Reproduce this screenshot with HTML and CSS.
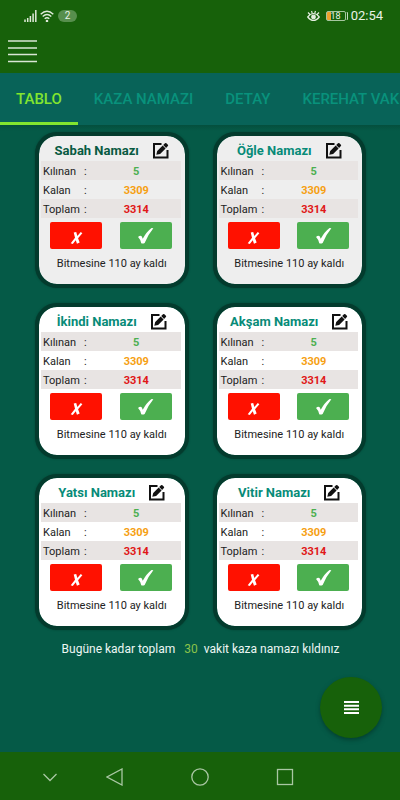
FILE: index.html
```html
<!DOCTYPE html>
<html lang="tr">
<head>
<meta charset="utf-8">
<meta name="viewport" content="width=device-width, initial-scale=1">
<title>Kaza Namazı</title>
<link rel="stylesheet" href="styles.css">
</head>
<body>
<svg class="sprite" aria-hidden="true">
  <symbol id="edit" viewBox="0 0 17 17">
    <path d="M9.500 2H2v13.500h13.500V8" fill="none" stroke="#111" stroke-width="2"/>
    <path d="M4.300 12.800l.9-3.800 5.500-5.500 2.900 2.900-5.500 5.500zM11.200 3l1.800-1.800q.7-.6 1.400 0l1.500 1.500q.6.700 0 1.400l-1.800 1.800z" fill="#111"/>
  </symbol>
  <symbol id="cross" viewBox="0 0 14 16">
    <path d="M4 2.500L6.700 2l1.200 4.400L11.600 2l1.700 1.300L8.700 8.800l1.700 4.700-2.900 1.300-1.300-3.900L3 15l-2.200-.8 4.600-5.800z" fill="#fff"/>
  </symbol>
  <symbol id="check" viewBox="0 0 16 16">
    <path d="M1 9.500q1.700-1.800 3.400-.8l1 2.400Q9 4.500 13.700 1l1.700.2Q10.500 7 7.200 15q-1.700 1-3.200.2Q3 11.500 1 9.500z" fill="#fff"/>
  </symbol>
</svg>
<header class="top">
  <div class="status">
    <div class="status-side">
      <svg width="13" height="12" viewBox="0 0 13 12" stroke="#dfead9" stroke-width="1.500"><path d="M1 9.500V12M3.700 8v4M6.400 6v6M9.100 3.500V12M11.800 0v12"/></svg>
      <svg width="14" height="12" viewBox="0 0 14 12" fill="none" stroke="#dfead9" stroke-width="1.400"><path d="M.7 4.200Q7-1.800 13.300 4.200M2.700 6.500q4.300-3.900 8.600 0M4.700 8.800q2.300-2 4.600 0"/><circle cx="7" cy="11" r=".6"/></svg>
      <span class="count">2</span>
    </div>
    <div class="status-side">
      <svg width="13" height="12" viewBox="0 0 13 12" fill="none" stroke="#e5eee1" stroke-width="1.200"><path d="M.7 7Q6.500 0 12.300 7 6.500 14 .7 7zM1 2.500L3 4.500M4.500 1l.7 2M8.500 1l-.7 2M12 2.500l-2 2"/><circle cx="6.500" cy="7" r="1.800" fill="#e5eee1"/></svg>
      <span class="battery">18</span>
      <span class="clock">02:54</span>
    </div>
  </div>
  <button class="menu" aria-label="Menü"><svg width="29" height="23" viewBox="0 0 29 23" stroke="#d9e6d5" stroke-width="1.500"><path d="M0 1h29M0 8h29M0 14.500h29M0 21.500h29"/></svg></button>
</header>
<nav class="tabs">
  <a class="tab active" href="#tablo">TABLO</a>
  <a class="tab" href="#kaza">KAZA NAMAZI</a>
  <a class="tab" href="#detay">DETAY</a>
  <a class="tab" href="#kerehat">KEREHAT VAK</a>
</nav>
<main class="content" id="tablo">
  <div class="cards">
    <section class="card muted">
      <div class="card-head"><h2 class="dark">Sabah Namazı</h2><button class="edit" aria-label="Düzenle"><svg><use href="#edit"/></svg></button></div>
      <table><tr><th>Kılınan</th><td>:</td><td class="green">5</td></tr><tr><th>Kalan</th><td>:</td><td class="orange">3309</td></tr><tr><th>Toplam</th><td>:</td><td class="red">3314</td></tr></table>
      <div class="actions"><button class="no" aria-label="Kılınmadı"><svg><use href="#cross"/></svg></button><button class="yes" aria-label="Kılındı"><svg><use href="#check"/></svg></button></div>
      <p>Bitmesine 110 ay kaldı</p>
    </section>
    <section class="card muted">
      <div class="card-head"><h2>Öğle Namazı</h2><button class="edit" aria-label="Düzenle"><svg><use href="#edit"/></svg></button></div>
      <table><tr><th>Kılınan</th><td>:</td><td class="green">5</td></tr><tr><th>Kalan</th><td>:</td><td class="orange">3309</td></tr><tr><th>Toplam</th><td>:</td><td class="red">3314</td></tr></table>
      <div class="actions"><button class="no" aria-label="Kılınmadı"><svg><use href="#cross"/></svg></button><button class="yes" aria-label="Kılındı"><svg><use href="#check"/></svg></button></div>
      <p>Bitmesine 110 ay kaldı</p>
    </section>
    <section class="card">
      <div class="card-head"><h2>İkindi Namazı</h2><button class="edit" aria-label="Düzenle"><svg><use href="#edit"/></svg></button></div>
      <table><tr><th>Kılınan</th><td>:</td><td class="green">5</td></tr><tr><th>Kalan</th><td>:</td><td class="orange">3309</td></tr><tr><th>Toplam</th><td>:</td><td class="red">3314</td></tr></table>
      <div class="actions"><button class="no" aria-label="Kılınmadı"><svg><use href="#cross"/></svg></button><button class="yes" aria-label="Kılındı"><svg><use href="#check"/></svg></button></div>
      <p>Bitmesine 110 ay kaldı</p>
    </section>
    <section class="card">
      <div class="card-head"><h2>Akşam Namazı</h2><button class="edit" aria-label="Düzenle"><svg><use href="#edit"/></svg></button></div>
      <table><tr><th>Kılınan</th><td>:</td><td class="green">5</td></tr><tr><th>Kalan</th><td>:</td><td class="orange">3309</td></tr><tr><th>Toplam</th><td>:</td><td class="red">3314</td></tr></table>
      <div class="actions"><button class="no" aria-label="Kılınmadı"><svg><use href="#cross"/></svg></button><button class="yes" aria-label="Kılındı"><svg><use href="#check"/></svg></button></div>
      <p>Bitmesine 110 ay kaldı</p>
    </section>
    <section class="card">
      <div class="card-head"><h2>Yatsı Namazı</h2><button class="edit" aria-label="Düzenle"><svg><use href="#edit"/></svg></button></div>
      <table><tr><th>Kılınan</th><td>:</td><td class="green">5</td></tr><tr><th>Kalan</th><td>:</td><td class="orange">3309</td></tr><tr><th>Toplam</th><td>:</td><td class="red">3314</td></tr></table>
      <div class="actions"><button class="no" aria-label="Kılınmadı"><svg><use href="#cross"/></svg></button><button class="yes" aria-label="Kılındı"><svg><use href="#check"/></svg></button></div>
      <p>Bitmesine 110 ay kaldı</p>
    </section>
    <section class="card">
      <div class="card-head"><h2>Vitir Namazı</h2><button class="edit" aria-label="Düzenle"><svg><use href="#edit"/></svg></button></div>
      <table><tr><th>Kılınan</th><td>:</td><td class="green">5</td></tr><tr><th>Kalan</th><td>:</td><td class="orange">3309</td></tr><tr><th>Toplam</th><td>:</td><td class="red">3314</td></tr></table>
      <div class="actions"><button class="no" aria-label="Kılınmadı"><svg><use href="#cross"/></svg></button><button class="yes" aria-label="Kılındı"><svg><use href="#check"/></svg></button></div>
      <p>Bitmesine 110 ay kaldı</p>
    </section>
  </div>
  <p class="summary"><span>Bugüne kadar toplam</span><span class="total">30</span><span>vakit kaza namazı kıldınız</span></p>
</main>
<button class="fab" aria-label="Liste"><svg width="15" height="13" viewBox="0 0 15 13" stroke="#fff" stroke-width="2"><path d="M0 1h15M0 4.700h15M0 8.300h15M0 12h15"/></svg></button>
<footer class="nav">
  <button class="hide" aria-label="Gizle"><svg viewBox="0 0 18 18"><path d="M2.500 6l6.500 6.500L15.500 6"/></svg></button>
  <button aria-label="Geri"><svg viewBox="0 0 18 18"><path d="M16 1v16L1 9z"/></svg></button>
  <button aria-label="Ana ekran"><svg viewBox="0 0 18 18"><circle cx="9" cy="9" r="8.200"/></svg></button>
  <button aria-label="Son uygulamalar"><svg viewBox="0 0 18 18"><rect x="1.500" y="1.500" width="15" height="15"/></svg></button>
</footer>
</body>
</html>
```
FILE: styles.css
```css
* { box-sizing: border-box; }
body {
  margin: 0;
  min-height: 100vh;
  display: flex;
  flex-direction: column;
  background: #055a47;
  font-family: Roboto, "Liberation Sans", sans-serif;
  overflow-x: hidden;
}
button { padding: 0; border: 0; background: none; display: flex; align-items: center; justify-content: center; }
svg { display: block; }
h2, p { margin: 0; }
.sprite { position: absolute; width: 0; height: 0; }

.top { background: #17610a; height: 73px; }
.status {
  height: 31px;
  padding: 0 17px 0 24px;
  display: flex;
  align-items: center;
  justify-content: space-between;
  color: #e9f2e6;
}
.status-side { display: flex; align-items: center; gap: 3px; }
.count {
  width: 19px;
  margin-left: 1px;
  border-radius: 6px;
  background: #578f4d;
  font-size: 10px;
  line-height: 12px;
  text-align: center;
}
.battery {
  width: 20px;
  margin: 0 2px 0 3px;
  border: 1px solid #a5c69f;
  border-radius: 2px;
  background: linear-gradient(90deg, #eda12c 4px, transparent 4px);
  font-size: 9px;
  line-height: 8px;
  text-align: center;
  box-shadow: 2px 0 0 -1px #17610a, 3px 0 0 -1px #c5dabf;
}
.clock { font-size: 13px; line-height: 16px; }
.menu { margin: 9px 8px 0; }

.tabs {
  display: flex;
  height: 52px;
  overflow: hidden;
  background: #086358;
}
.tab {
  flex: none;
  padding: 0 16px;
  border-bottom: 3px solid transparent;
  color: #08927c;
  font-size: 15px;
  font-weight: 500;
  line-height: 53px;
  text-decoration: none;
}
.tab.active { border-color: #82e52f; color: #82e52f; }

.content {
  flex: 1;
  padding: 7px 34px 0 35px;
  background: linear-gradient(#044f3d, transparent 6px);
}
.cards { display: grid; grid-template-columns: 1fr 1fr; gap: 15px 24px; }
.card {
  height: 156px;
  padding: 3px 4px 2px 2px;
  border: 4px solid #033b2d;
  border-radius: 22px;
  background: #fff;
  background-clip: padding-box;
  box-shadow: 0 0 2px #044132;
  color: #222;
  font-size: 11px;
}
.muted { background-color: #eee; }
.card-head { display: flex; justify-content: center; align-items: center; gap: 13px; height: 22px; padding-left: 2px; }
h2 { padding-top: 2px; color: #078b78; font-size: 13px; font-weight: 700; line-height: 18px; white-space: nowrap; }
h2.dark { color: #075a42; }
.edit svg { width: 17px; height: 17px; }
table { width: 100%; table-layout: fixed; border-collapse: collapse; line-height: 17px; }
tr:nth-child(odd) { background: #e8e4e3; }
th, td { padding: 2px 0 0; }
th { width: 43px; padding-left: 2px; font-weight: 400; text-align: left; }
td:nth-child(2) { width: 8px; }
td:nth-child(3) { font-weight: 700; text-align: center; }
.green { color: #4caf50; }
.orange { color: #f6a012; }
.red { color: #e01717; }
.actions { display: flex; justify-content: space-between; padding: 4px 9px 0; }
.actions button { width: 52px; height: 27px; border-radius: 2px; }
.actions .no { background: #ff1100; padding-top: 3px; }
.actions .yes { background: #4caf50; }
.no svg { width: 13px; height: 15px; }
.yes svg { width: 17px; height: 17px; }
.card p { padding: 6px 0 0 2px; line-height: 18px; text-align: center; }
.summary {
  display: flex;
  justify-content: center;
  gap: 6px;
  padding-top: 10px;
  color: #edf7f4;
  font-size: 12px;
  line-height: 18px;
  white-space: nowrap;
}
.total { padding-left: 3px; color: #8bc34a; }

.fab {
  position: fixed;
  right: 18px;
  bottom: 62px;
  width: 62px;
  height: 61px;
  border-radius: 50%;
  background: #17610a;
  box-shadow: 0 2px 4px #033f31;
}
.nav {
  display: flex;
  justify-content: center;
  height: 48px;
  padding: 2px 45px 0 0;
  background: #17610a;
}
.nav button { width: 85px; }
.nav .hide { width: 45px; }
.nav svg { width: 18px; height: 18px; fill: none; stroke: #a9c7a3; stroke-width: 1.3px; }
```
